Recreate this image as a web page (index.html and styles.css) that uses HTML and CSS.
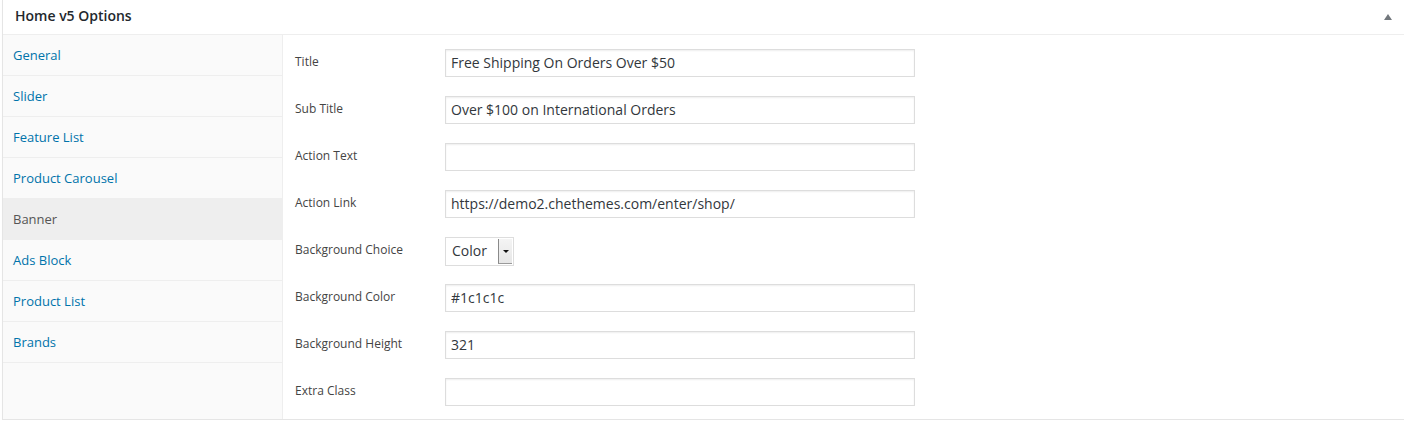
FILE: index.html
```html
<!DOCTYPE html>
<html>
<head>
<meta charset="utf-8">
<link rel="stylesheet" href="styles.css">
</head>
<body>
<div class="postbox">
  <div class="postbox-header">
    <h2 class="postbox-title">Home v5 Options</h2>
    <span class="toggle-arrow"></span>
  </div>
  <div class="postbox-body">
    <ul class="tabs">
      <li class="tab"><a>General</a></li>
      <li class="tab"><a>Slider</a></li>
      <li class="tab"><a>Feature List</a></li>
      <li class="tab"><a>Product Carousel</a></li>
      <li class="tab active"><a>Banner</a></li>
      <li class="tab"><a>Ads Block</a></li>
      <li class="tab"><a>Product List</a></li>
      <li class="tab"><a>Brands</a></li>
    </ul>
    <div class="panel">
      <div class="field">
        <label class="field-label">Title</label>
        <div class="text-input">Free Shipping On Orders Over $50</div>
      </div>
      <div class="field">
        <label class="field-label">Sub Title</label>
        <div class="text-input">Over $100 on International Orders</div>
      </div>
      <div class="field">
        <label class="field-label">Action Text</label>
        <div class="text-input"></div>
      </div>
      <div class="field">
        <label class="field-label">Action Link</label>
        <div class="text-input">https://demo2.chethemes.com/enter/shop/</div>
      </div>
      <div class="field">
        <label class="field-label">Background Choice</label>
        <div class="select-input">
          <span class="select-value">Color</span>
          <span class="select-button"><span class="select-arrow"></span></span>
        </div>
      </div>
      <div class="field">
        <label class="field-label">Background Color</label>
        <div class="text-input">#1c1c1c</div>
      </div>
      <div class="field">
        <label class="field-label">Background Height</label>
        <div class="text-input">321</div>
      </div>
      <div class="field">
        <label class="field-label">Extra Class</label>
        <div class="text-input"></div>
      </div>
    </div>
  </div>
</div>
</body>
</html>
```
FILE: styles.css
```css
* { box-sizing: border-box; }
html, body { margin: 0; padding: 0; background: #fff; }
body {
  font-family: "Open Sans", "Noto Sans", sans-serif;
  color: #444;
}
.postbox {
  margin-left: 2px;
  width: 1402px;
  border: 1px solid #e5e5e5;
  border-top: none;
  border-right: none;
  background: #fff;
  box-shadow: 0 1px 1px rgba(0,0,0,0.04);
}
.postbox-header {
  height: 35px;
  border-bottom: 1px solid #eee;
  display: flex;
  align-items: center;
  justify-content: space-between;
  padding: 0 12px 0 12px;
}
.postbox-title {
  margin: 0;
  font-size: 14px;
  font-weight: 600;
  color: #23282d;
  line-height: 1;
  padding-bottom: 2px;
}
.toggle-arrow {
  width: 0;
  height: 0;
  border-left: 4px solid transparent;
  border-right: 4px solid transparent;
  border-bottom: 6px solid #72777c;
  margin-top: -1px;
}
.postbox-body {
  display: flex;
  height: 384px;
}
.tabs {
  list-style: none;
  margin: 0;
  padding: 0;
  width: 280px;
  background: #fafafa;
  border-right: 1px solid #eee;
  flex-shrink: 0;
}
.tab {
  height: 41px;
  border-bottom: 1px solid #eee;
  display: flex;
  align-items: center;
  padding-left: 10px;
  padding-bottom: 1px;
  font-size: 13px;
}
.tab a {
  color: #0073aa;
}
.tab.active {
  background: #eee;
}
.tab.active a {
  color: #555;
}
.panel {
  flex: 1;
  padding: 14px 12px 0;
  display: flex;
  flex-direction: column;
  gap: 19px;
}
.field {
  display: flex;
  align-items: center;
  height: 28px;
}
.field-label {
  width: 150px;
  font-size: 12px;
  color: #444;
  padding-bottom: 3px;
}
.text-input {
  width: 470px;
  height: 28px;
  border: 1px solid #ddd;
  box-shadow: inset 0 1px 2px rgba(0,0,0,0.07);
  font-size: 14px;
  color: #32373c;
  padding: 0 5px;
  line-height: 26px;
  background: #fff;
}
.select-input {
  width: 69px;
  height: 29px;
  border: 1px solid #ddd;
  display: flex;
  align-items: stretch;
  background: #fff;
  margin-top: 1px;
}
.select-value {
  flex: 1;
  font-size: 14px;
  color: #32373c;
  padding-left: 6px;
  line-height: 26px;
}
.select-button {
  width: 14px;
  margin: 1px 1px 1px 0;
  background: linear-gradient(#f4f4f4, #e6e6e6);
  border-left: 1px solid #8a8a8a;
  border-bottom: 1px solid #9a9a9a;
  display: flex;
  align-items: center;
  justify-content: center;
}
.select-arrow {
  width: 0;
  height: 0;
  border-left: 3px solid transparent;
  border-right: 3px solid transparent;
  border-top: 3px solid #111;
}
```
